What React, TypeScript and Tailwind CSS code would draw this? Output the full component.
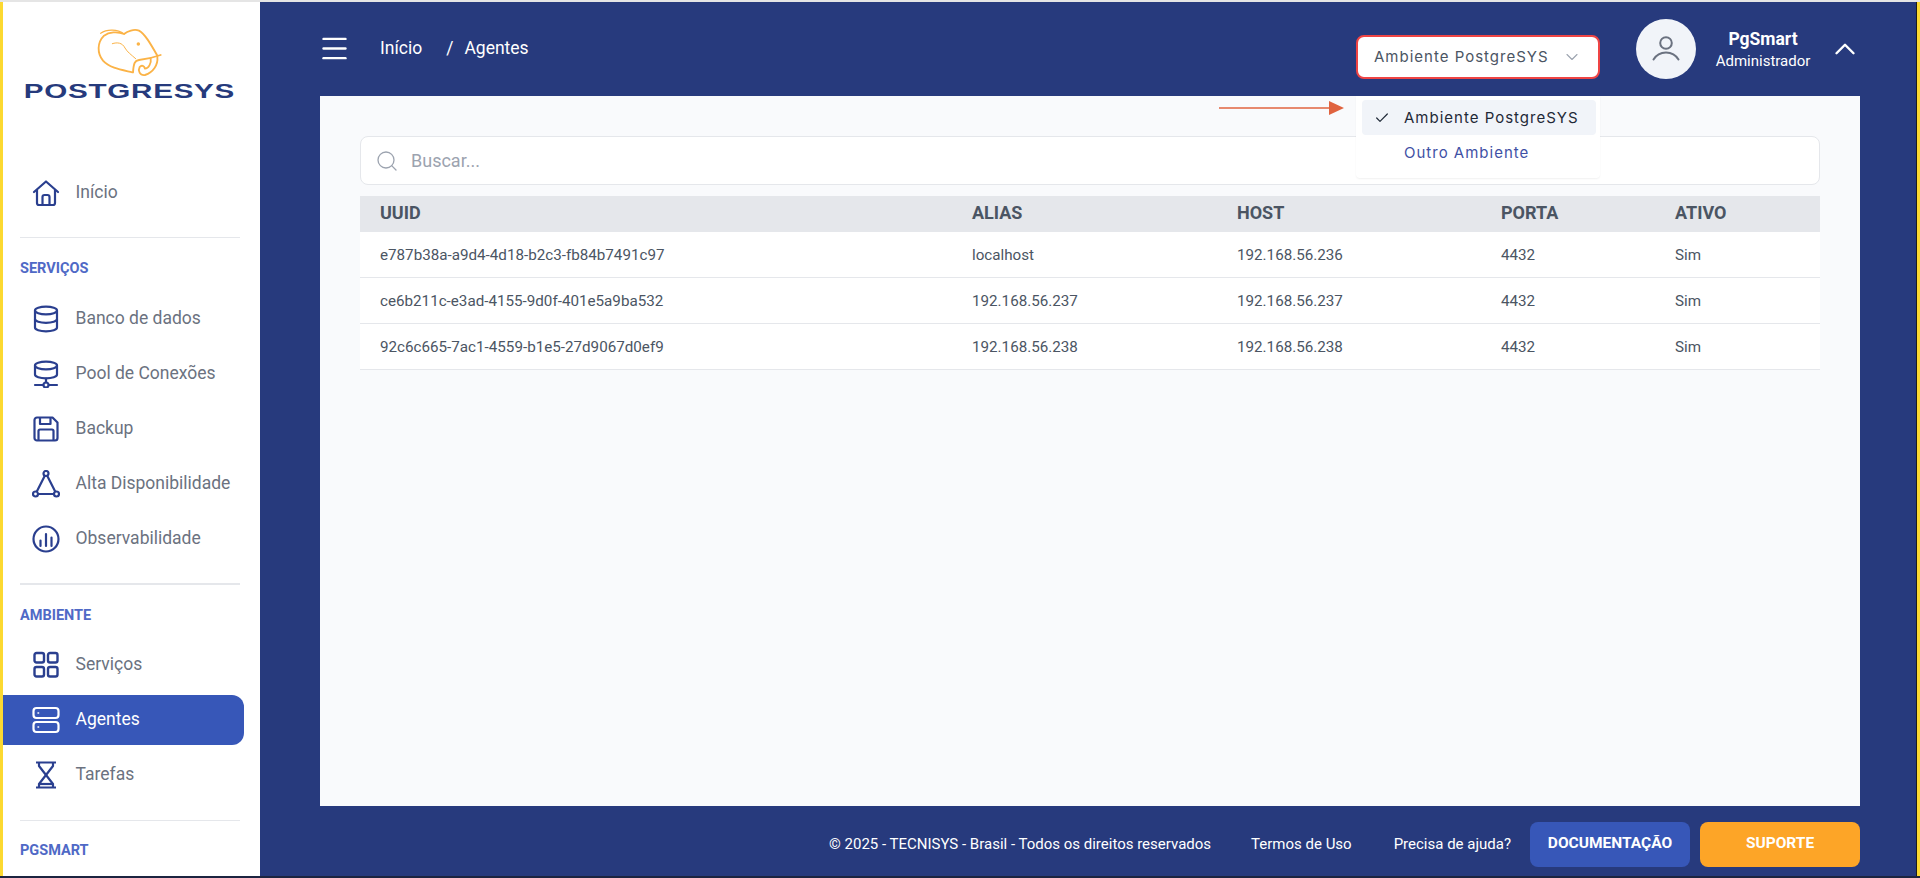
import { ChevronDown, ChevronUp, Check, Search, Menu } from 'lucide-react';

const ICON = 'w-7 h-7 shrink-0 text-[#2a3f8f]';

function HomeIcon() {
  return (
    <svg className={ICON} viewBox="0 0 28 28" fill="none" stroke="currentColor" strokeWidth="2.2" strokeLinejoin="round" strokeLinecap="round">
      <path d="M2 13 14 2.500 26 13" />
      <path d="M5 11v13a2 2 0 0 0 2 2h14a2 2 0 0 0 2-2V11" />
      <path d="M10.500 26v-8a2 2 0 0 1 2-2h3a2 2 0 0 1 2 2v8" />
    </svg>
  );
}

function DatabaseIcon() {
  return (
    <svg className={ICON} viewBox="0 0 28 28" fill="none" stroke="currentColor" strokeWidth="2.2">
      <ellipse cx="14" cy="5.500" rx="11" ry="3.800" />
      <path d="M3 5.500v17c0 2.200 4.900 3.800 11 3.800s11-1.600 11-3.800v-17" />
      <path d="M3 14c0 2.200 4.900 3.800 11 3.800s11-1.600 11-3.800" />
    </svg>
  );
}

function PoolIcon() {
  return (
    <svg className={ICON} viewBox="0 0 28 28" fill="none" stroke="currentColor" strokeWidth="2.2" strokeLinecap="round">
      <ellipse cx="14" cy="5.500" rx="11" ry="3.800" />
      <path d="M3 5.500v9c0 2.200 4.900 3.800 11 3.800s11-1.600 11-3.800v-9" />
      <path d="M14 18.500v4M3 25h8M17 25h8" />
      <circle cx="14" cy="25" r="2.500" />
    </svg>
  );
}

function SaveIcon() {
  return (
    <svg className={ICON} viewBox="0 0 28 28" fill="none" stroke="currentColor" strokeWidth="2.2" strokeLinejoin="round">
      <path d="M5 2.500h15.500l5 5V23a2.500 2.500 0 0 1-2.500 2.500H5A2.500 2.500 0 0 1 2.500 23V5A2.500 2.500 0 0 1 5 2.500Z" />
      <path d="M8 2.500v6.500h10.500V2.500" />
      <path d="M6.500 25.500V16a1.500 1.500 0 0 1 1.500-1.500h12a1.500 1.500 0 0 1 1.500 1.500v9.500" />
    </svg>
  );
}

function TriangleIcon() {
  return (
    <svg className={ICON} viewBox="0 0 28 28" fill="none" stroke="currentColor" strokeWidth="2.2">
      <circle cx="14" cy="3.500" r="2.500" />
      <circle cx="3.500" cy="24" r="2.500" />
      <circle cx="24.500" cy="24" r="2.500" />
      <path d="M12.800 5.800 4.700 21.700M15.200 5.800l8.100 15.900M6 24h16" />
    </svg>
  );
}

function ChartIcon() {
  return (
    <svg className={ICON} viewBox="0 0 28 28" fill="none" stroke="currentColor" strokeWidth="2.2" strokeLinecap="round">
      <circle cx="14" cy="14" r="12.500" />
      <path d="M8.500 15.500V21M14 9v12M19.500 12.500V21" />
    </svg>
  );
}

function GridIcon() {
  return (
    <svg className={ICON} viewBox="0 0 28 28" fill="none" stroke="currentColor" strokeWidth="2.400">
      <rect x="2.500" y="2" width="9.500" height="9.500" rx="2" />
      <rect x="16" y="2" width="9.500" height="9.500" rx="2" />
      <rect x="2.500" y="16" width="9.500" height="9.500" rx="2" />
      <rect x="16" y="16" width="9.500" height="9.500" rx="2" />
    </svg>
  );
}

function ServerIcon() {
  return (
    <svg className="w-7 h-7 shrink-0 text-white" viewBox="0 0 28 28" fill="none" stroke="currentColor" strokeWidth="2.200" strokeLinecap="round">
      <rect x="1.500" y="2" width="25" height="10" rx="3" />
      <rect x="1.500" y="16" width="25" height="10" rx="3" />
      <path d="M6 7h.6M6 21h.6" strokeWidth="1.500" />
    </svg>
  );
}

function HourglassIcon() {
  return (
    <svg className={ICON} viewBox="0 0 28 28" fill="none" stroke="currentColor" strokeWidth="2.200" strokeLinejoin="round">
      <path d="M4 1.500h20M4 26.500h20" />
      <path d="M7 1.500v3.500l14 18v3.500" />
      <path d="M21 1.500v3.500l-14 18v3.500" />
      <path d="M8 23h12" />
    </svg>
  );
}

function UserIcon() {
  return (
    <svg className="w-[30px] h-[30px] text-[#6b7280]" viewBox="0 0 30 30" fill="none" stroke="currentColor" strokeWidth="2" strokeLinecap="round">
      <circle cx="15" cy="9" r="5.800" />
      <path d="M2.500 25.500C8 16 22 16 27.500 25.500" />
    </svg>
  );
}

function Logo() {
  return (
    <div className="flex flex-col items-center h-[166px] pt-[18px] pr-1">
      <svg className="w-[80px] h-[60px] text-[#fbb347]" viewBox="0 0 240 180" fill="none" stroke="currentColor" strokeWidth="5.500" strokeLinecap="round" strokeLinejoin="round">
        <path d="M130 157 C 100 150, 62 145, 42 122 C 24 100, 24 68, 45 47 C 60 36, 85 34, 105 42 C 115 34, 135 26, 150 32 C 168 42, 185 72, 205 107" />
        <path d="M35 40 C 55 26, 85 28, 106 42" strokeWidth="3.500" />
        <path d="M70 71 C 85 66, 100 68, 108 84 C 115 96, 125 103, 140 116" strokeWidth="3" />
        <path d="M215 105 C 195 112, 170 118, 150 120 C 138 122, 134 128, 132 157" />
        <path d="M205 110 C 208 135, 192 158, 168 165 C 152 167, 146 152, 152 141 C 158 134, 166 138, 168 146 C 178 146, 188 130, 185 115" />
        <circle cx="148" cy="72" r="2.500" fill="currentColor" />
      </svg>
      <span className="mt-px font-['Liberation_Sans',sans-serif] font-bold text-[20px] leading-[20px] tracking-[0.5px] text-[#263a7c] scale-x-[1.48] whitespace-nowrap">
        POSTGRESYS
      </span>
    </div>
  );
}

function NavItem({ icon, label, active }: { icon: React.ReactNode; label: string; active?: boolean }) {
  return (
    <div
      className={
        active
          ? 'flex items-center h-[50px] w-[241.500px] pl-[29px] gap-4 rounded-r-xl bg-[#3757b8] text-white'
          : 'flex items-center h-[50px] pl-[29px] gap-4 text-[#6b7280]'
      }
    >
      {icon}
      <span className="text-[17.500px] leading-none whitespace-nowrap">{label}</span>
    </div>
  );
}

const rows = [
  ['e787b38a-a9d4-4d18-b2c3-fb84b7491c97', 'localhost', '192.168.56.236', '4432', 'Sim'],
  ['ce6b211c-e3ad-4155-9d0f-401e5a9ba532', '192.168.56.237', '192.168.56.237', '4432', 'Sim'],
  ['92c6c665-7ac1-4559-b1e5-27d9067d0ef9', '192.168.56.238', '192.168.56.238', '4432', 'Sim'],
];

const GRID = 'grid grid-cols-[592px_265px_264px_174px_1fr] px-5 items-center';
const SECTION = 'pl-[17.500px] text-[14.500px] leading-[20px] font-bold text-[#4f69c6]';
const DIVIDER = 'ml-[17.500px] mr-5 bg-[#e5e7eb]';

export default function App() {
  return (
    <div className="relative h-screen flex flex-col overflow-hidden bg-white font-['Roboto',sans-serif]">
      <div className="h-0.5 bg-[#e5e5e5] shrink-0" />
      <div className="flex-1 flex min-h-0">
        <div className="w-[2.500px] bg-[#fcd931] shrink-0" />
        <aside className="w-[257.500px] shrink-0 bg-white overflow-hidden">
          <Logo />
          <NavItem icon={<HomeIcon />} label="Início" />
          <div className={`${DIVIDER} h-px mt-[19px]`} />
          <div className={`${SECTION} pt-[21px] pb-[15px]`}>SERVIÇOS</div>
          <div className="flex flex-col gap-[5px]">
            <NavItem icon={<DatabaseIcon />} label="Banco de dados" />
            <NavItem icon={<PoolIcon />} label="Pool de Conexões" />
            <NavItem icon={<SaveIcon />} label="Backup" />
            <NavItem icon={<TriangleIcon />} label="Alta Disponibilidade" />
            <NavItem icon={<ChartIcon />} label="Observabilidade" />
          </div>
          <div className={`${DIVIDER} h-0.5 mt-[19px]`} />
          <div className={`${SECTION} pt-[21px] pb-3.5`}>AMBIENTE</div>
          <div className="flex flex-col gap-[5px]">
            <NavItem icon={<GridIcon />} label="Serviços" />
            <NavItem icon={<ServerIcon />} label="Agentes" active />
            <NavItem icon={<HourglassIcon />} label="Tarefas" />
          </div>
          <div className={`${DIVIDER} h-px mt-5`} />
          <div className={`${SECTION} pt-5`}>PGSMART</div>
        </aside>

        <main className="flex-1 flex flex-col min-w-0 bg-[#273a7d]">
          <header className="h-[94px] shrink-0 flex items-center pl-[58px] pr-[54px] text-white">
            <Menu className="w-[33px] h-[33px] -mt-[2px]" strokeWidth={1.700} />
            <nav className="ml-[29px] -mt-[2px] flex items-center text-[17.500px]">
              <span>Início</span>
              <span className="ml-6">/</span>
              <span className="ml-[11px]">Agentes</span>
            </nav>
            <div className="ml-auto mt-4 flex items-center h-[44px] w-[244px] rounded-lg border-[2.500px] border-[#ef4444] bg-white px-4 text-[#4b5563] font-['Inter',sans-serif] text-[15px] tracking-[1px]">
              <span className="whitespace-nowrap">Ambiente PostgreSYS</span>
              <ChevronDown className="ml-auto w-5 h-5 text-[#9ca3af]" strokeWidth={1.300} />
            </div>
            <div className="ml-9 w-[60px] h-[60px] rounded-full bg-[#f1f4f9] flex items-center justify-center">
              <UserIcon />
            </div>
            <div className="ml-3 w-[110px] flex flex-col items-center">
              <span className="text-[17.500px] leading-[24px] font-bold">PgSmart</span>
              <span className="text-[15px] leading-[20px]">Administrador</span>
            </div>
            <ChevronUp className="ml-2.5 w-[34px] h-[34px]" strokeWidth={1.700} />
          </header>

          <section className="flex-1 min-h-0 ml-[60px] mr-[56px] bg-[#f9fafc] px-10 pt-10">
            <div className="flex items-center h-[49px] rounded-lg border border-[#e5e7eb] bg-white pl-3.5 text-[18px] text-[#9ca3af]">
              <Search className="w-6 h-6" strokeWidth={1.300} />
              <span className="ml-3">Buscar...</span>
            </div>
            <div className={`${GRID} mt-[11px] h-[36px] pb-1 bg-[#e5e7eb] text-[18px] font-bold text-[#4b5563]`}>
              <span>UUID</span>
              <span>ALIAS</span>
              <span>HOST</span>
              <span>PORTA</span>
              <span>ATIVO</span>
            </div>
            {rows.map((row) => (
              <div key={row[0]} className={`${GRID} h-[46px] pt-px bg-white border-b border-[#e5e7eb] text-[15.200px] text-[#4b5563]`}>
                {row.map((cell, i) => (
                  <span key={i}>{cell}</span>
                ))}
              </div>
            ))}
          </section>

          <footer className="h-[70px] shrink-0 flex items-center justify-end pr-[56px] pt-1.5 text-white text-[15px]">
            <span>© 2025 - TECNISYS - Brasil - Todos os direitos reservados</span>
            <span className="ml-10">Termos de Uso</span>
            <span className="ml-[42px]">Precisa de ajuda?</span>
            <button className="ml-[19px] w-[160px] h-[45px] rounded-lg bg-[#3757b8] font-bold text-[15.500px]">DOCUMENTAÇÃO</button>
            <button className="ml-2.5 w-[160px] h-[45px] rounded-lg bg-[#fda527] font-bold text-[15.500px]">SUPORTE</button>
          </footer>
        </main>

        <div className="w-px bg-[#1c1c1c] shrink-0" />
        <div className="w-[3px] bg-[#fcd931] shrink-0" />
      </div>
      <div className="h-0.5 bg-[#1c2440] shrink-0" />

      {/* seta e menu aberto, por cima do conteudo */}
      <svg className="absolute left-[1218px] top-[100px]" width="128" height="16" viewBox="0 0 128 16">
        <path d="M1 8h112" stroke="#e0633f" strokeWidth="1.500" />
        <path d="M111 1l15 7-15 7Z" fill="#e0633f" />
      </svg>
      <div className="absolute left-[1356px] top-[96px] w-[244px] h-[82px] rounded-b bg-white shadow-[0_1px_2px_rgba(0,0,0,0.06)] font-['Inter',sans-serif] text-[15px] tracking-[1px] pt-1 pr-1 pl-1.5">
        <div className="flex items-center h-[35px] pt-px rounded-sm bg-[#f1f4f9] text-[#1f2937] pl-3">
          <Check className="w-4 h-4" strokeWidth={1.800} />
          <span className="ml-[14px] whitespace-nowrap">Ambiente PostgreSYS</span>
        </div>
        <div className="flex items-center h-[35px] pt-px pl-[42px] text-[#3f51a5] whitespace-nowrap">Outro Ambiente</div>
      </div>
    </div>
  );
}
